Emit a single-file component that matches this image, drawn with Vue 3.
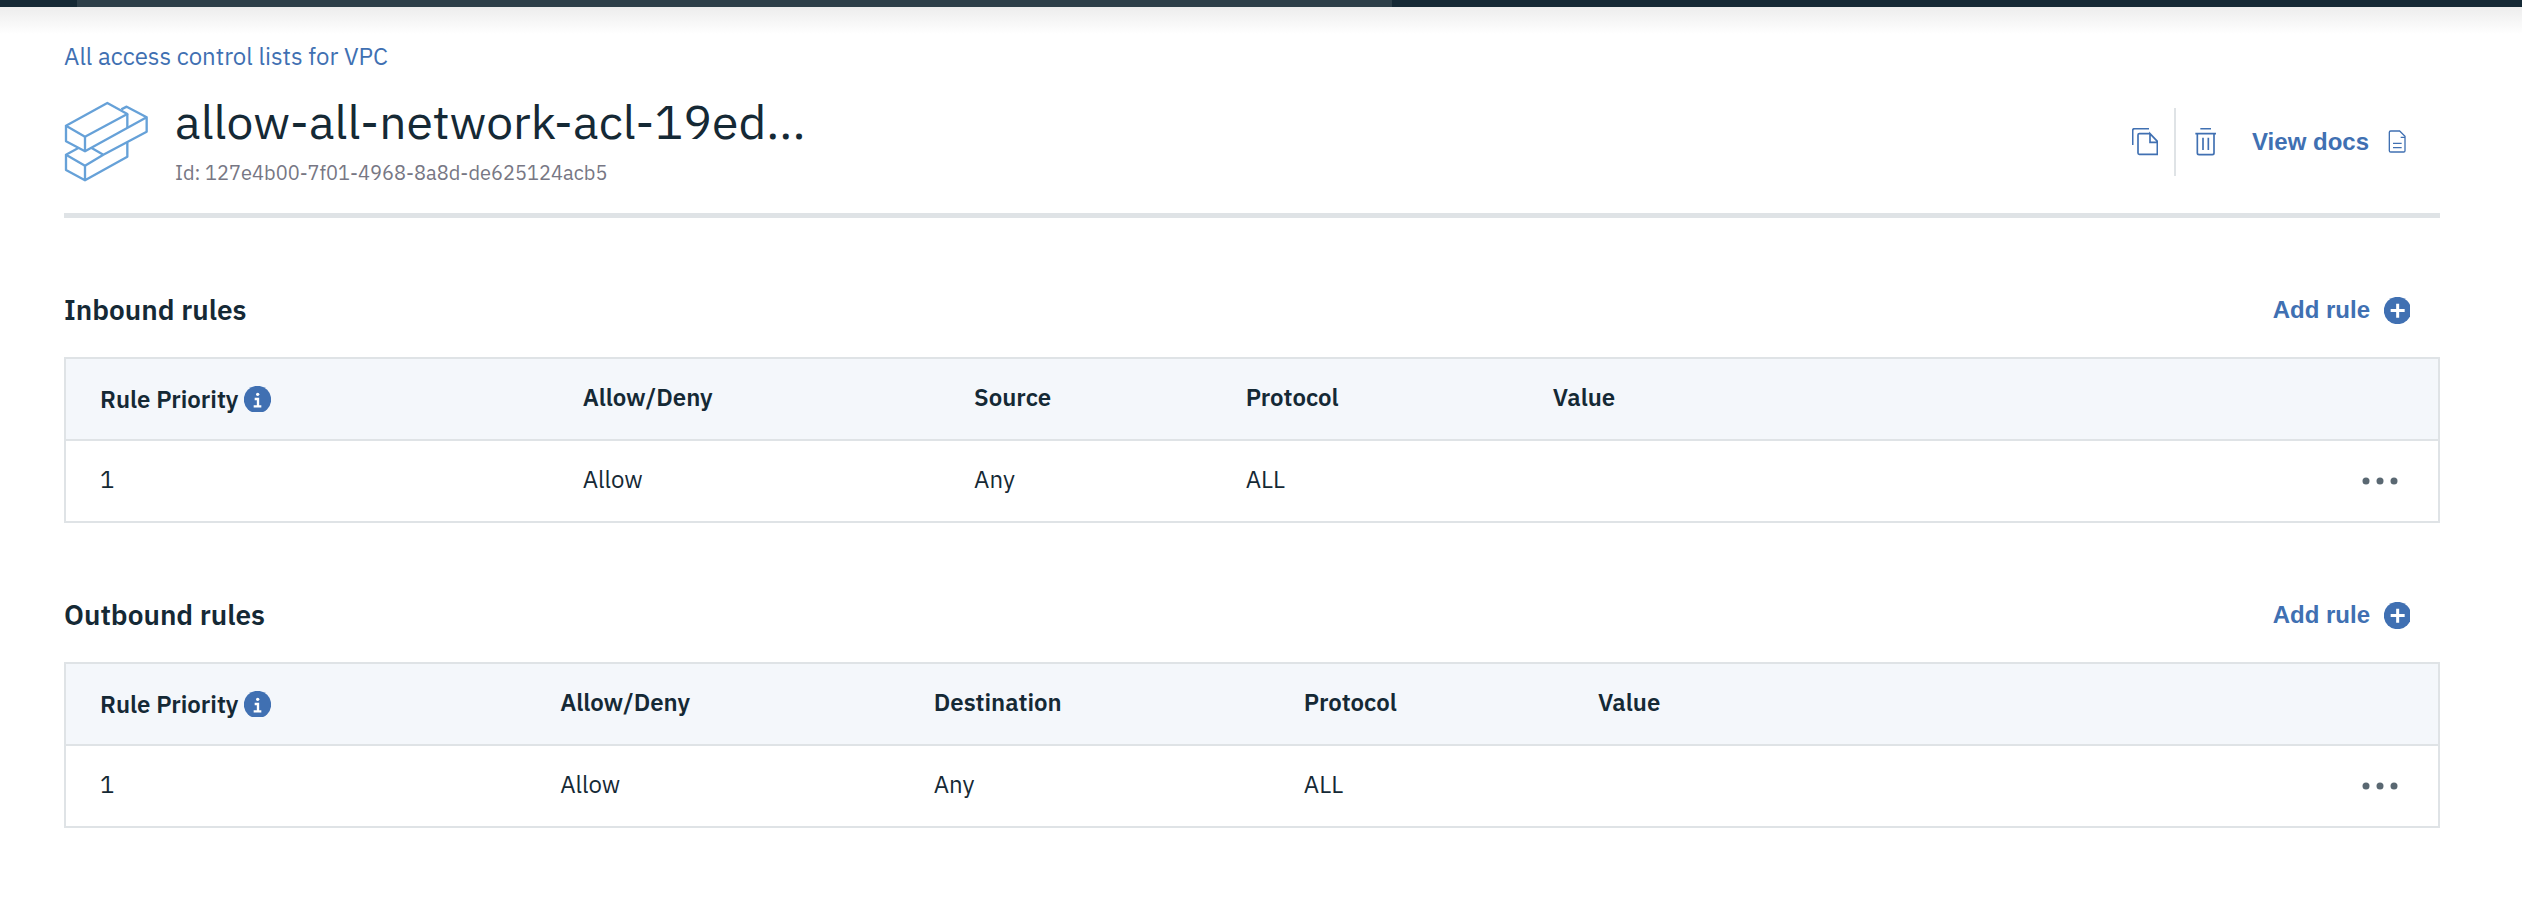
<script setup>
const sections = [
  {
    id: 'inbound',
    title: 'Inbound rules',
    columns: ['Allow/Deny', 'Source', 'Protocol', 'Value'],
    widths: [20.35, 16.5, 11.45, 12.95, 31.75, 7],
    rows: [['1', 'Allow', 'Any', 'ALL', '']],
  },
  {
    id: 'outbound',
    title: 'Outbound rules',
    columns: ['Allow/Deny', 'Destination', 'Protocol', 'Value'],
    widths: [19.4, 15.75, 15.6, 12.4, 29.85, 7],
    rows: [['1', 'Allow', 'Any', 'ALL', '']],
  },
]
</script>

<template>
  <div class="page">
    <div class="topbar"><div class="topbar-segment"></div></div>
    <main class="content">
      <nav class="breadcrumb" aria-label="Breadcrumb">
        <a href="#">All access control lists for VPC</a>
      </nav>

      <header class="header">
        <svg class="logo" viewBox="192 306 255 243" aria-hidden="true">
          <path d="M198 380 L322 312 L382 345 L255 413 Z" />
          <path d="M198 380 V427 L255 457 L440 355 V398 L310 467 L275 447" />
          <path d="M255 413 V457 M382 345 V387" />
          <path d="M364 331 L380 323 L440 355" />
          <path d="M235 447 L198 467 L255 500 L310 467" />
          <path d="M198 467 V513 L255 544 L382 473 V430 M255 500 V544" />
        </svg>
        <div class="titles">
          <h1>allow-all-network-acl-19ed...</h1>
          <p>Id: 127e4b00-7f01-4968-8a8d-de625124acb5</p>
        </div>
        <div class="actions">
          <button type="button" class="icon-button copy" aria-label="Copy">
            <svg width="26" height="28" viewBox="96 114 78 84" class="line-icon">
              <path d="M98 165 V122 Q98 116 104 116 H147" />
              <path d="M150 131 H118 Q114 131 114 135 V189 Q114 193 118 193 H172 V154 L150 131 V157 H173" />
            </svg>
          </button>
          <span class="separator"></span>
          <button type="button" class="icon-button trash" aria-label="Delete">
            <svg width="21" height="28" viewBox="285 114 63 84" class="line-icon">
              <path d="M301 116 H333 M286 131 H348" />
              <path d="M292 131 V189 Q292 194 297 194 H337 Q342 194 342 189 V131" />
              <path d="M309 143 V180 M325 143 V180" />
            </svg>
          </button>
          <a href="#" class="action">
            <span>View docs</span>
            <svg width="26" height="28" viewBox="850 114 78 84" class="line-icon doc">
              <path d="M901 123 H873 Q869 123 869 127 V182 Q869 186 873 186 H912 Q916 186 916 182 V139 L900 123" />
              <path d="M903 142 H916 M880 160 H906 M880 173 H906" />
            </svg>
          </a>
        </div>
      </header>

      <section v-for="s in sections" :key="s.id" class="rules" :aria-labelledby="s.id">
        <div class="rules-head">
          <h2 :id="s.id">{{ s.title }}</h2>
          <button type="button" class="action">
            <span>Add rule</span>
            <svg width="26" height="27" viewBox="552 48 78 81" aria-hidden="true">
              <circle cx="592.5" cy="88.5" r="41" fill="#4070b2" />
              <path d="M572 88.5 H614 M593 68 V110" stroke="#fff" stroke-width="9" />
            </svg>
          </button>
        </div>
        <div class="frame">
          <table>
            <colgroup>
              <col v-for="(w, i) in s.widths" :key="i" :style="{ width: w + '%' }" />
            </colgroup>
            <thead>
              <tr>
                <th scope="col" class="priority-cell">
                  <span class="priority">
                    Rule Priority
                    <svg width="27" height="26" viewBox="612 318 81 78" aria-hidden="true">
                      <circle cx="652.5" cy="358.5" r="41" fill="#4070b2" />
                      <circle cx="653" cy="343" r="5" fill="#fff" />
                      <path d="M644 357 H654 V379 M641 379 H664" fill="none" stroke="#fff" stroke-width="7" />
                    </svg>
                  </span>
                </th>
                <th v-for="c in s.columns" :key="c" scope="col">{{ c }}</th>
                <td></td>
              </tr>
            </thead>
            <tbody>
              <tr v-for="(row, r) in s.rows" :key="r">
                <td v-for="(cell, i) in row" :key="i">{{ cell }}</td>
                <td class="menu-cell">
                  <button type="button" class="icon-button" aria-label="Rule options">
                    <svg width="36" height="8" viewBox="0 0 36 8" fill="#5a6872">
                      <circle cx="4" cy="4" r="3.5" />
                      <circle cx="18" cy="4" r="3.5" />
                      <circle cx="32" cy="4" r="3.5" />
                    </svg>
                  </button>
                </td>
              </tr>
            </tbody>
          </table>
        </div>
      </section>
    </main>
  </div>
</template>

<style>
body {
  background: #fff;
}
</style>

<style scoped>
.page {
  font-family: "IBM Plex Sans", Roboto, sans-serif;
  font-size: 24px;
  line-height: 32px;
  color: #152935;
  background: linear-gradient(#e8e8e8, #fff 34px);
}
.topbar {
  height: 7px;
  background: #152935;
}
.topbar-segment {
  height: 7px;
  margin-left: 77px;
  width: 52.15%;
  background: #2d3f49;
}
.content {
  padding: 33px 82px 94px 64px;
}
.breadcrumb a {
  color: #4070b2;
  text-decoration: none;
}
.header {
  display: flex;
  align-items: center;
  margin-top: 21px;
  padding-bottom: 26px;
  border-bottom: 5px solid #dfe3e6;
}
.logo {
  width: 85px;
  height: 81px;
  margin: 3px 26px 0 0;
  fill: none;
  stroke: #66a1d8;
  stroke-width: 7;
  stroke-linejoin: round;
}
.titles {
  flex: 1;
}
h1 {
  margin: 0;
  font-size: 48px;
  line-height: 56px;
  font-weight: 400;
}
.titles p {
  margin: 10px 0 0;
  font-size: 20px;
  line-height: 28px;
  color: #777784;
}
.actions {
  display: flex;
  align-items: center;
  padding: 3px 31px 0 0;
}
.icon-button,
.action {
  display: flex;
  align-items: center;
  padding: 0;
  border: 0;
  background: none;
  cursor: pointer;
}
.action {
  gap: 14px;
  font-family: "Helvetica Neue", "Liberation Sans", sans-serif;
  font-size: 24px;
  line-height: 32px;
  font-weight: 700;
  color: #4070b2;
  text-decoration: none;
}
.line-icon {
  fill: none;
  stroke: #4070b2;
  stroke-width: 5;
}
.doc {
  stroke-width: 4;
}
.copy {
  margin-right: 16px;
}
.separator {
  width: 2px;
  height: 68px;
  background: #dfe3e6;
}
.trash {
  margin: 0 36px 0 19px;
}
.rules {
  margin-top: 72px;
}
.rules-head {
  display: flex;
  justify-content: space-between;
  align-items: center;
  padding-right: 30px;
  margin-bottom: 27px;
}
h2 {
  margin: 0;
  font-size: 28px;
  line-height: 40px;
  font-weight: 600;
}
.frame {
  border: 2px solid #dfe3e6;
}
table {
  width: 100%;
  table-layout: fixed;
  border-spacing: 0;
}
th,
td {
  height: 75px;
  padding: 0 0 5px 34px;
  text-align: left;
  vertical-align: middle;
}
th {
  font-weight: 600;
}
thead tr {
  background: #f4f7fb;
}
tbody td {
  border-top: 2px solid #dfe3e6;
}
.priority-cell,
.menu-cell {
  height: 80px;
  padding-bottom: 0;
}
.priority {
  display: flex;
  align-items: center;
  gap: 6px;
}
.menu-cell {
  padding-right: 40px;
}
.menu-cell .icon-button {
  margin-left: auto;
}
</style>
